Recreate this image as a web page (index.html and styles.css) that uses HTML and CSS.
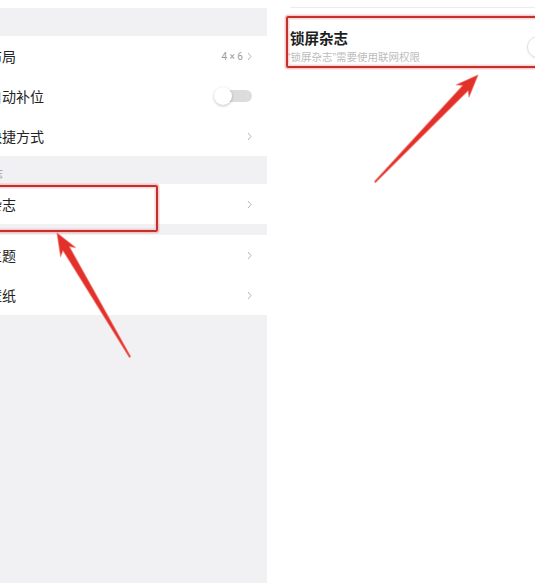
FILE: index.html
```html
<!DOCTYPE html>
<html lang="zh-CN">
<head>
<meta charset="utf-8">
<title>锁屏杂志</title>
<link rel="stylesheet" href="styles.css">
</head>
<body>
<div class="page">
  <section class="left">
    <div class="status"></div>
    <div class="gap gap-top"></div>
    <div class="group">
      <div class="row"><span class="label">布局</span><span class="value">4 × 6</span><svg class="chev" viewBox="0 0 5 9"><polyline points="1,1 4,4.5 1,8"/></svg></div>
      <div class="row"><span class="label">自动补位</span><span class="switch"><span class="knob"></span></span></div>
      <div class="row"><span class="label">快捷方式</span><svg class="chev" viewBox="0 0 5 9"><polyline points="1,1 4,4.5 1,8"/></svg></div>
    </div>
    <div class="gap section"><span class="section-title">志</span></div>
    <div class="group">
      <div class="row"><span class="label">杂志</span><svg class="chev" viewBox="0 0 5 9"><polyline points="1,1 4,4.5 1,8"/></svg></div>
    </div>
    <div class="gap gap-small"></div>
    <div class="group">
      <div class="row"><span class="label">主题</span><svg class="chev" viewBox="0 0 5 9"><polyline points="1,1 4,4.5 1,8"/></svg></div>
      <div class="row"><span class="label">壁纸</span><svg class="chev" viewBox="0 0 5 9"><polyline points="1,1 4,4.5 1,8"/></svg></div>
    </div>
  </section>
  <section class="right">
    <div class="divider"></div>
    <div class="mag-row">
      <div class="mag-text">
        <div class="mag-title">锁屏杂志</div>
        <div class="mag-sub">“锁屏杂志”需要使用联网权限</div>
      </div>
      <span class="round-knob"></span>
    </div>
  </section>

  <div class="mark mark-left"></div>
  <div class="mark mark-right"></div>
  <svg class="arrows" viewBox="0 0 535 583" width="535" height="583">
    <polygon class="arrow" points="57,233 75.6,247.6 69.3,246.6 130.6,356.6 129.4,357.4 62.9,250.4 60.6,256.6"/>
    <polygon class="arrow" points="478,75 469,97 468.2,90.6 375.5,182.5 374.5,181.5 462.8,85.4 456.4,84.8"/>
  </svg>
</div>
</body>
</html>
```

FILE: styles.css
```css
* { box-sizing: border-box; }
html, body { margin: 0; padding: 0; background: #fff; }
body {
  font-family: "Noto Sans CJK SC", "Noto Sans", sans-serif;
  color: #222;
}
.page {
  position: relative;
  width: 535px;
  height: 583px;
  display: flex;
  overflow: hidden;
}
.left {
  width: 267px;
  height: 583px;
  background: #f1f1f3;
  overflow: hidden;
  flex: none;
}
.status { height: 8px; background: #fff; }
.gap-top { height: 28px; }
.section { height: 28px; padding-top: 10px; }
.section-title {
  display: block;
  margin-left: -8px;
  font-size: 11px;
  line-height: 14px;
  color: #9a9a9a;
}
.gap-small { height: 11px; }
.group { background: #fff; }
.row {
  height: 40px;
  display: flex;
  align-items: center;
  padding-right: 15px;
}
.label {
  margin-left: -12px;
  font-size: 14px;
  line-height: 20px;
  color: #222;
  flex: 1;
  white-space: nowrap;
}
.value {
  font-family: "Roboto", "Noto Sans", sans-serif;
  font-size: 10px;
  color: #9c9c9c;
  margin-right: 4px;
}
.chev {
  width: 5px;
  height: 9px;
  fill: none;
  stroke: #aaa;
  stroke-width: 0.9;
}
.switch {
  position: relative;
  width: 36px;
  height: 12px;
  border-radius: 6px;
  background: #dcdcdc;
}
.knob {
  position: absolute;
  left: -2px;
  top: -3px;
  width: 18px;
  height: 18px;
  border-radius: 50%;
  background: #fff;
  box-shadow: 0 1px 3px rgba(0,0,0,0.25);
}
.right {
  flex: 1;
  background: #fff;
  overflow: hidden;
}
.divider {
  margin-top: 7px;
  margin-left: 23px;
  height: 1px;
  background: #ececec;
}
.mag-row {
  display: flex;
  align-items: center;
  padding: 20px 0 0 23px;
}
.mag-text { flex: 1; }
.mag-title {
  font-size: 14.5px;
  font-weight: 700;
  line-height: 20px;
  color: #1e1e1e;
}
.mag-sub {
  margin-top: 1px;
  margin-left: -3px;
  font-family: "Liberation Sans", "Noto Sans CJK SC", sans-serif;
  font-size: 10.5px;
  line-height: 16px;
  color: #bcbcbc;
  white-space: nowrap;
}
.round-knob {
  width: 22px;
  height: 22px;
  border-radius: 50%;
  background: #fff;
  border: 1px solid #e2e2e2;
  box-shadow: 0 1px 2px rgba(0,0,0,0.08);
  margin-right: -14px;
  flex: none;
}
.mark {
  position: absolute;
  border: 2.5px solid #c4302d;
  border-radius: 2px;
  box-shadow: 0 0 0 1.5px rgba(240,140,140,0.45), inset 0 0 0 1.5px rgba(240,140,140,0.35);
}
.mark-left { left: -4px; top: 185px; width: 162px; height: 47px; }
.mark-right { left: 286px; top: 16px; width: 260px; height: 52px; }
.arrows {
  position: absolute;
  left: 0;
  top: 0;
  pointer-events: none;
}
.arrow {
  fill: #e2302a;
  stroke: rgba(240,110,100,0.55);
  stroke-width: 1.2;
  stroke-linejoin: round;
}
```
